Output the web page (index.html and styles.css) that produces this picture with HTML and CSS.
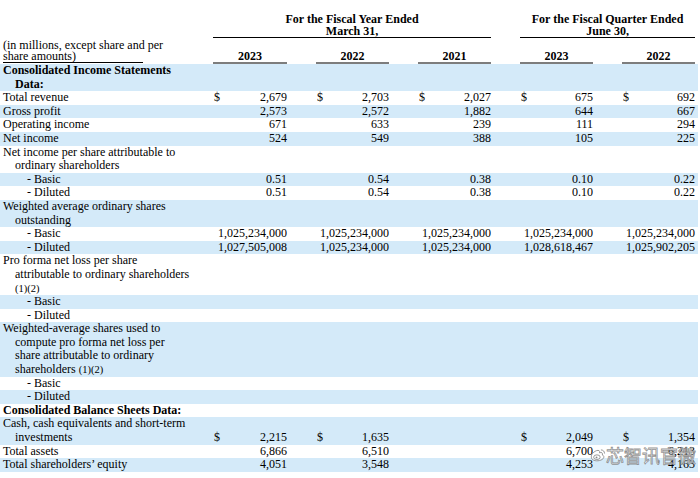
FILE: index.html
```html
<!DOCTYPE html>
<html>
<head>
<meta charset="utf-8">
<link rel="stylesheet" href="styles.css">
</head>
<body>
<div class="page">
<table class="fin">
  <colgroup>
    <col class="c-label"><col class="c-g1"><col class="c-gap"><col class="c-g"><col class="c-gap"><col class="c-g"><col class="c-gap"><col class="c-g"><col class="c-gap"><col class="c-g"><col class="c-end">
  </colgroup>
  <thead>
    <tr class="hA">
      <th></th>
      <th colspan="5" class="period">For the Fiscal Year Ended<br>March 31,</th>
      <th></th>
      <th colspan="3" class="period">For the Fiscal Quarter Ended<br>June 30,</th>
      <th></th>
    </tr>
    <tr class="hB">
      <th class="unit"><span class="unit-box">(in millions, except share and per<br>share amounts)</span></th>
      <th class="yr">2023</th><th></th>
      <th class="yr">2022</th><th></th>
      <th class="yr">2021</th><th></th>
      <th class="yr">2023</th><th></th>
      <th class="yr">2022</th><th></th>
    </tr>
  </thead>
  <tbody>
    <tr class="b"><td class="lbl sec">Consolidated Income Statements<br>Data:</td><td></td><td></td><td></td><td></td><td></td><td></td><td></td><td></td><td></td><td></td></tr>
    <tr class="w"><td class="lbl">Total revenue</td><td class="v"><span class="cur">$</span>2,679</td><td></td><td class="v"><span class="cur">$</span>2,703</td><td></td><td class="v"><span class="cur">$</span>2,027</td><td></td><td class="v"><span class="cur">$</span>675</td><td></td><td class="v"><span class="cur">$</span>692</td><td></td></tr>
    <tr class="b"><td class="lbl">Gross profit</td><td class="v">2,573</td><td></td><td class="v">2,572</td><td></td><td class="v">1,882</td><td></td><td class="v">644</td><td></td><td class="v">667</td><td></td></tr>
    <tr class="w"><td class="lbl">Operating income</td><td class="v">671</td><td></td><td class="v">633</td><td></td><td class="v">239</td><td></td><td class="v">111</td><td></td><td class="v">294</td><td></td></tr>
    <tr class="b"><td class="lbl">Net income</td><td class="v">524</td><td></td><td class="v">549</td><td></td><td class="v">388</td><td></td><td class="v">105</td><td></td><td class="v">225</td><td></td></tr>
    <tr class="w"><td class="lbl">Net income per share attributable to<br>ordinary shareholders</td><td></td><td></td><td></td><td></td><td></td><td></td><td></td><td></td><td></td><td></td></tr>
    <tr class="b"><td class="lbl sub">- Basic</td><td class="v">0.51</td><td></td><td class="v">0.54</td><td></td><td class="v">0.38</td><td></td><td class="v">0.10</td><td></td><td class="v">0.22</td><td></td></tr>
    <tr class="w"><td class="lbl sub">- Diluted</td><td class="v">0.51</td><td></td><td class="v">0.54</td><td></td><td class="v">0.38</td><td></td><td class="v">0.10</td><td></td><td class="v">0.22</td><td></td></tr>
    <tr class="b"><td class="lbl">Weighted average ordinary shares<br>outstanding</td><td></td><td></td><td></td><td></td><td></td><td></td><td></td><td></td><td></td><td></td></tr>
    <tr class="w"><td class="lbl sub">- Basic</td><td class="v">1,025,234,000</td><td></td><td class="v">1,025,234,000</td><td></td><td class="v">1,025,234,000</td><td></td><td class="v">1,025,234,000</td><td></td><td class="v">1,025,234,000</td><td></td></tr>
    <tr class="b"><td class="lbl sub">- Diluted</td><td class="v">1,027,505,008</td><td></td><td class="v">1,025,234,000</td><td></td><td class="v">1,025,234,000</td><td></td><td class="v">1,028,618,467</td><td></td><td class="v">1,025,902,205</td><td></td></tr>
    <tr class="w"><td class="lbl">Pro forma net loss per share<br>attributable to ordinary shareholders<br><span class="fn">(1)(2)</span></td><td></td><td></td><td></td><td></td><td></td><td></td><td></td><td></td><td></td><td></td></tr>
    <tr class="b"><td class="lbl sub">- Basic</td><td></td><td></td><td></td><td></td><td></td><td></td><td></td><td></td><td></td><td></td></tr>
    <tr class="w"><td class="lbl sub">- Diluted</td><td></td><td></td><td></td><td></td><td></td><td></td><td></td><td></td><td></td><td></td></tr>
    <tr class="b"><td class="lbl">Weighted-average shares used to<br>compute pro forma net loss per<br>share attributable to ordinary<br>shareholders <span class="fn">(1)(2)</span></td><td></td><td></td><td></td><td></td><td></td><td></td><td></td><td></td><td></td><td></td></tr>
    <tr class="w"><td class="lbl sub">- Basic</td><td></td><td></td><td></td><td></td><td></td><td></td><td></td><td></td><td></td><td></td></tr>
    <tr class="b"><td class="lbl sub">- Diluted</td><td></td><td></td><td></td><td></td><td></td><td></td><td></td><td></td><td></td><td></td></tr>
    <tr class="w"><td class="lbl sec">Consolidated Balance Sheets Data:</td><td></td><td></td><td></td><td></td><td></td><td></td><td></td><td></td><td></td><td></td></tr>
    <tr class="b"><td class="lbl">Cash, cash equivalents and short-term<br>investments</td><td class="v"><span class="cur">$</span>2,215</td><td></td><td class="v"><span class="cur">$</span>1,635</td><td></td><td class="v"></td><td></td><td class="v"><span class="cur">$</span>2,049</td><td></td><td class="v"><span class="cur">$</span>1,354</td><td></td></tr>
    <tr class="w"><td class="lbl">Total assets</td><td class="v">6,866</td><td></td><td class="v">6,510</td><td></td><td class="v"></td><td></td><td class="v">6,700</td><td></td><td class="v">6,213</td><td></td></tr>
    <tr class="b"><td class="lbl">Total shareholders’ equity</td><td class="v">4,051</td><td></td><td class="v">3,548</td><td></td><td class="v"></td><td></td><td class="v">4,253</td><td></td><td class="v">4,163</td><td></td></tr>
  </tbody>
</table>
<div class="watermark">
  <svg class="wm-logo" width="16" height="16" viewBox="0 0 22 20">
    <path d="M9 4 C4 6 1 10 2 14 C3 18 10 19 15 17 C20 15 20 11 17 10 C18 7 16 6 13 7 C14 4 12 3 9 4 Z" fill="rgba(255,255,255,0.7)" stroke="#8a8a8a" stroke-width="1.2"/>
    <ellipse cx="9.5" cy="13" rx="4.5" ry="3.2" fill="none" stroke="#8a8a8a" stroke-width="1.2"/>
    <circle cx="9" cy="13.3" r="1.3" fill="#8a8a8a"/>
    <path d="M15 3 C18 3 20 5 20 8" fill="none" stroke="#8a8a8a" stroke-width="1.2"/>
  </svg>
  <span class="wm-text">芯智讯官微</span>
</div>
</div>
</body>
</html>
```

FILE: styles.css
```css
html, body {
  margin: 0;
  padding: 0;
  background: #ffffff;
}
.page {
  position: relative;
  width: 700px;
  height: 478px;
  overflow: hidden;
  padding-top: 13px;
  box-sizing: border-box;
  font-family: "Liberation Serif", "Times New Roman", serif;
  font-size: 12px;
  color: #000;
}
.fin {
  table-layout: fixed;
  width: 698px;
  border-collapse: separate;
  border-spacing: 0;
}
.c-label { width: 213px; }
.c-g1 { width: 74px; }
.c-g { width: 73px; }
.c-gap { width: 29px; }
.c-end { width: 3px; }
.fin th, .fin td {
  padding: 0;
  font-weight: normal;
}
.hA th {
  line-height: 12px;
  height: 24px;
}
.hA .period {
  font-weight: bold;
  text-align: center;
  border-bottom: 1px solid #000;
  vertical-align: bottom;
}
.hB {
  height: 26px;
}
.hB th {
  vertical-align: bottom;
}
.hB .unit {
  text-align: left;
  padding-left: 3px;
  padding-bottom: 1px;
}
.unit-box {
  display: inline-block;
  width: 140px;
  line-height: 11px;
  border-bottom: 1px solid #000;
  white-space: nowrap;
  vertical-align: bottom;
}
.hB .yr {
  font-weight: bold;
  text-align: center;
  line-height: 12px;
  border-bottom: 2px solid #7d7d7d;
}
tbody td {
  line-height: 13.6px;
  vertical-align: bottom;
  white-space: nowrap;
}
tr.b td { background: #d4eaf9; }
tr.w td { background: #ffffff; }
.lbl {
  padding-left: 15px !important;
  text-indent: -12px;
}
.lbl.sub {
  padding-left: 27px !important;
  text-indent: 0;
}
.lbl.sec {
  font-weight: bold;
}
.fn {
  font-size: 10.5px;
}
.v {
  text-align: right;
}
.cur {
  float: left;
  padding-left: 1px;
}
.watermark {
  position: absolute;
  left: 590px;
  top: 444px;
  display: flex;
  align-items: center;
  gap: 0;
  white-space: nowrap;
}
.wm-text {
  font-family: "Noto Sans CJK SC", sans-serif;
  font-size: 18px;
  line-height: 22px;
  color: rgba(255, 255, 255, 0.75);
  -webkit-text-stroke: 0.8px rgba(110, 110, 110, 0.75);
}
```
